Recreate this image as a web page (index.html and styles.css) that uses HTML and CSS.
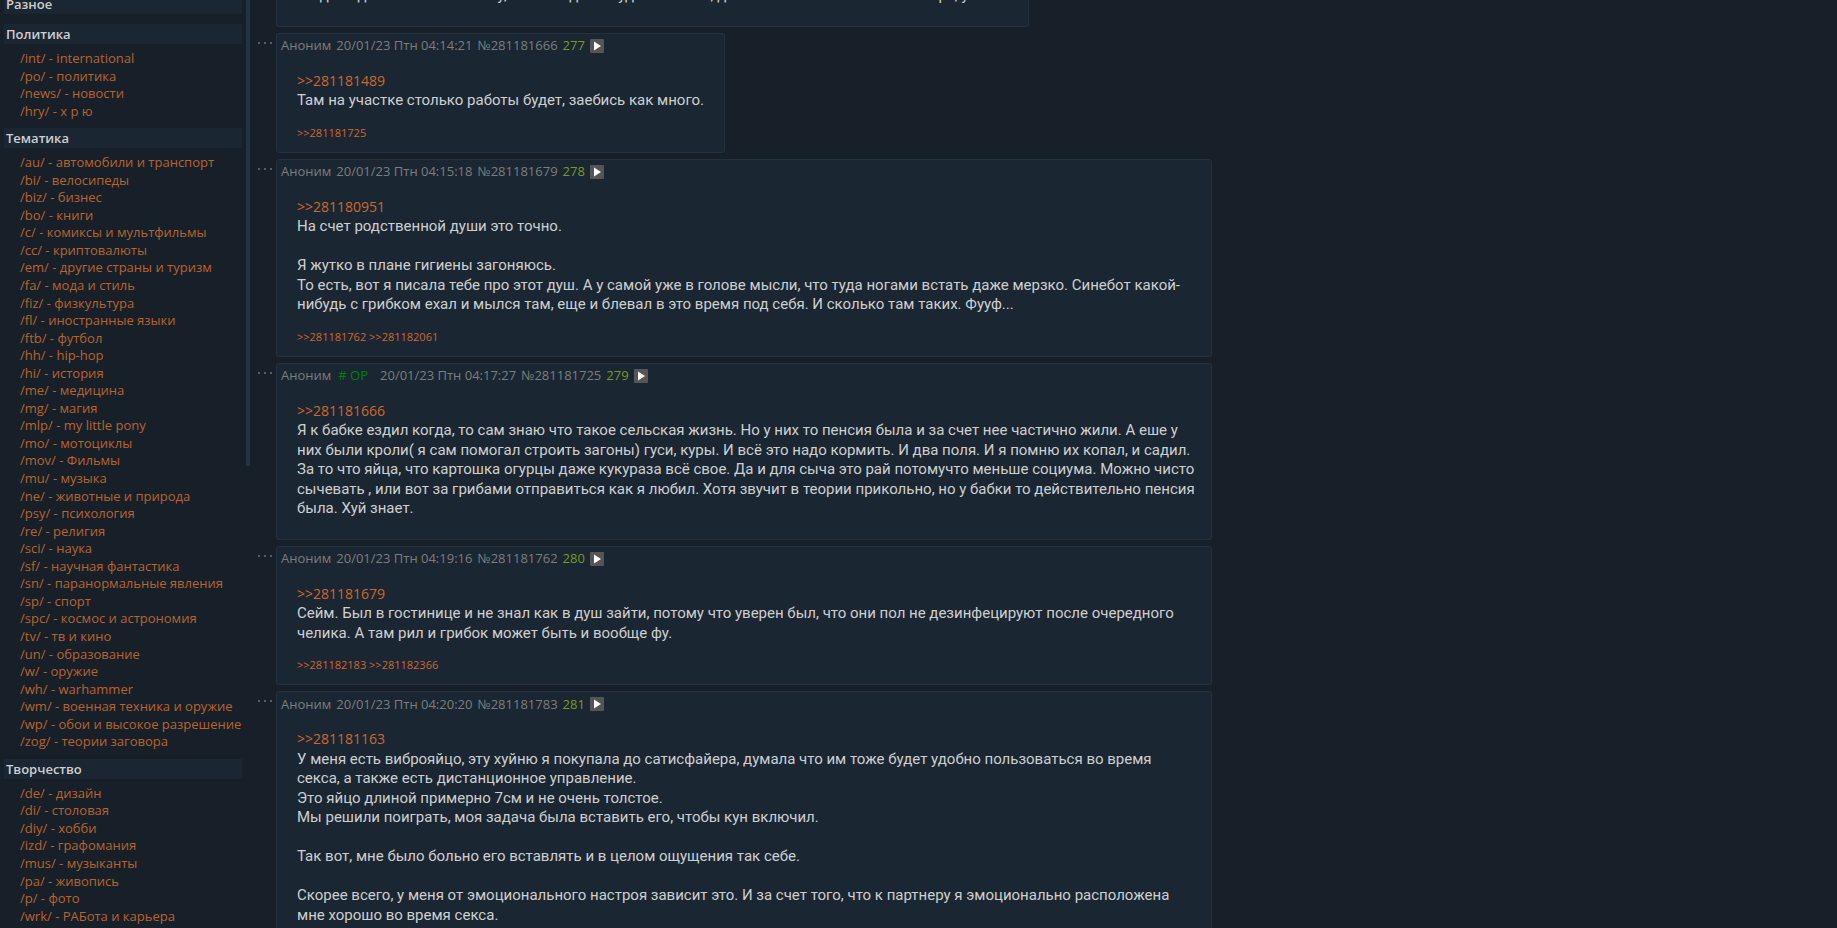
FILE: index.html
```
<!DOCTYPE html>
<html lang="ru">
<head>
    <meta charset="UTF-8">
    <meta name="viewport" content="width=device-width, initial-scale=1.0">
    <title>Тред</title>
    <link rel="stylesheet" href="styles.css">
</head>
<body>
    <div class="layout">
        <nav class="sidebar">
            <h2 class="sidebar-title">Разное</h2>

            <h2 class="sidebar-title">Политика</h2>
            <ul class="boards">
                <li><a href="#">/int/ - international</a></li>
                <li><a href="#">/po/ - политика</a></li>
                <li><a href="#">/news/ - новости</a></li>
                <li><a href="#">/hry/ - х р ю</a></li>
            </ul>

            <h2 class="sidebar-title">Тематика</h2>
            <ul class="boards">
                <li><a href="#">/au/ - автомобили и транспорт</a></li>
                <li><a href="#">/bi/ - велосипеды</a></li>
                <li><a href="#">/biz/ - бизнес</a></li>
                <li><a href="#">/bo/ - книги</a></li>
                <li><a href="#">/c/ - комиксы и мультфильмы</a></li>
                <li><a href="#">/cc/ - криптовалюты</a></li>
                <li><a href="#">/em/ - другие страны и туризм</a></li>
                <li><a href="#">/fa/ - мода и стиль</a></li>
                <li><a href="#">/fiz/ - физкультура</a></li>
                <li><a href="#">/fl/ - иностранные языки</a></li>
                <li><a href="#">/ftb/ - футбол</a></li>
                <li><a href="#">/hh/ - hip-hop</a></li>
                <li><a href="#">/hi/ - история</a></li>
                <li><a href="#">/me/ - медицина</a></li>
                <li><a href="#">/mg/ - магия</a></li>
                <li><a href="#">/mlp/ - my little pony</a></li>
                <li><a href="#">/mo/ - мотоциклы</a></li>
                <li><a href="#">/mov/ - Фильмы</a></li>
                <li><a href="#">/mu/ - музыка</a></li>
                <li><a href="#">/ne/ - животные и природа</a></li>
                <li><a href="#">/psy/ - психология</a></li>
                <li><a href="#">/re/ - религия</a></li>
                <li><a href="#">/sci/ - наука</a></li>
                <li><a href="#">/sf/ - научная фантастика</a></li>
                <li><a href="#">/sn/ - паранормальные явления</a></li>
                <li><a href="#">/sp/ - спорт</a></li>
                <li><a href="#">/spc/ - космос и астрономия</a></li>
                <li><a href="#">/tv/ - тв и кино</a></li>
                <li><a href="#">/un/ - образование</a></li>
                <li><a href="#">/w/ - оружие</a></li>
                <li><a href="#">/wh/ - warhammer</a></li>
                <li><a href="#">/wm/ - военная техника и оружие</a></li>
                <li><a href="#">/wp/ - обои и высокое разрешение</a></li>
                <li><a href="#">/zog/ - теории заговора</a></li>
            </ul>

            <h2 class="sidebar-title">Творчество</h2>
            <ul class="boards">
                <li><a href="#">/de/ - дизайн</a></li>
                <li><a href="#">/di/ - столовая</a></li>
                <li><a href="#">/diy/ - хобби</a></li>
                <li><a href="#">/izd/ - графомания</a></li>
                <li><a href="#">/mus/ - музыканты</a></li>
                <li><a href="#">/pa/ - живопись</a></li>
                <li><a href="#">/p/ - фото</a></li>
                <li><a href="#">/wrk/ - РАБота и карьера</a></li>
            </ul>
        </nav>
        <div class="scroll-thumb"></div>

        <main class="thread">
            <div class="post-row post-row-cut">
                <article class="post">
                    <div class="post-text">Тогда надо было сказать ему, что мне дома будет отлично, для нас это самое важное в мире, у меня</div>
                </article>
            </div>

            <div class="post-row">
                <button class="post-menu" aria-label="Меню поста"><svg viewBox="0 0 14 2"><path d="M0 0h2v2H0zM6 0h2v2H6zM12 0h2v2h-2z"/></svg></button>
                <article class="post">
                    <header class="post-head">
                        <span class="name">Аноним</span>
                        <span>20/01/23 Птн 04:14:21</span>
                        <a href="#" class="number">№281181666</a>
                        <span class="order">277</span>
                        <button class="play" aria-label="Ответить"><svg viewBox="0 0 14 14"><path d="M4 2.500v9L11 7z"/></svg></button>
                    </header>
                    <div class="post-text"><a href="#">&gt;&gt;281181489</a><br>Там на участке столько работы будет, заебись как много.</div>
                    <div class="replies"><a href="#">&gt;&gt;281181725</a></div>
                </article>
            </div>

            <div class="post-row">
                <button class="post-menu" aria-label="Меню поста"><svg viewBox="0 0 14 2"><path d="M0 0h2v2H0zM6 0h2v2H6zM12 0h2v2h-2z"/></svg></button>
                <article class="post">
                    <header class="post-head">
                        <span class="name">Аноним</span>
                        <span>20/01/23 Птн 04:15:18</span>
                        <a href="#" class="number">№281181679</a>
                        <span class="order">278</span>
                        <button class="play" aria-label="Ответить"><svg viewBox="0 0 14 14"><path d="M4 2.500v9L11 7z"/></svg></button>
                    </header>
                    <div class="post-text"><a href="#">&gt;&gt;281180951</a><br>На счет родственной души это точно.<br><br>Я жутко в плане гигиены загоняюсь.<br>То есть, вот я писала тебе про этот душ. А у самой уже в голове мысли, что туда ногами встать даже мерзко. Синебот какой-нибудь с грибком ехал и мылся там, еще и блевал в это время под себя. И сколько там таких. Фууф...</div>
                    <div class="replies"><a href="#">&gt;&gt;281181762</a> <a href="#">&gt;&gt;281182061</a></div>
                </article>
            </div>

            <div class="post-row">
                <button class="post-menu" aria-label="Меню поста"><svg viewBox="0 0 14 2"><path d="M0 0h2v2H0zM6 0h2v2H6zM12 0h2v2h-2z"/></svg></button>
                <article class="post">
                    <header class="post-head">
                        <span class="name">Аноним</span>
                        <span class="op"># OP</span>
                        <span>20/01/23 Птн 04:17:27</span>
                        <a href="#" class="number">№281181725</a>
                        <span class="order">279</span>
                        <button class="play" aria-label="Ответить"><svg viewBox="0 0 14 14"><path d="M4 2.500v9L11 7z"/></svg></button>
                    </header>
                    <div class="post-text post-text-wide"><a href="#">&gt;&gt;281181666</a><br>Я к бабке ездил когда, то сам знаю что такое сельская жизнь. Но у них то пенсия была и за счет нее частично жили. А еше у<br>них были кроли( я сам помогал строить загоны) гуси, куры. И всё это надо кормить. И два поля. И я помню их копал, и садил.<br>За то что яйца, что картошка огурцы даже кукураза всё свое. Да и для сыча это рай потомучто меньше социума. Можно чисто<br>сычевать , или вот за грибами отправиться как я любил. Хотя звучит в теории прикольно, но у бабки то действительно пенсия<br>была. Хуй знает.</div>
                </article>
            </div>

            <div class="post-row">
                <button class="post-menu" aria-label="Меню поста"><svg viewBox="0 0 14 2"><path d="M0 0h2v2H0zM6 0h2v2H6zM12 0h2v2h-2z"/></svg></button>
                <article class="post">
                    <header class="post-head">
                        <span class="name">Аноним</span>
                        <span>20/01/23 Птн 04:19:16</span>
                        <a href="#" class="number">№281181762</a>
                        <span class="order">280</span>
                        <button class="play" aria-label="Ответить"><svg viewBox="0 0 14 14"><path d="M4 2.500v9L11 7z"/></svg></button>
                    </header>
                    <div class="post-text"><a href="#">&gt;&gt;281181679</a><br>Сейм. Был в гостинице и не знал как в душ зайти, потому что уверен был, что они пол не дезинфецируют после очередного челика. А там рил и грибок может быть и вообще фу.</div>
                    <div class="replies"><a href="#">&gt;&gt;281182183</a> <a href="#">&gt;&gt;281182366</a></div>
                </article>
            </div>

            <div class="post-row">
                <button class="post-menu" aria-label="Меню поста"><svg viewBox="0 0 14 2"><path d="M0 0h2v2H0zM6 0h2v2H6zM12 0h2v2h-2z"/></svg></button>
                <article class="post">
                    <header class="post-head">
                        <span class="name">Аноним</span>
                        <span>20/01/23 Птн 04:20:20</span>
                        <a href="#" class="number">№281181783</a>
                        <span class="order">281</span>
                        <button class="play" aria-label="Ответить"><svg viewBox="0 0 14 14"><path d="M4 2.500v9L11 7z"/></svg></button>
                    </header>
                    <div class="post-text"><a href="#">&gt;&gt;281181163</a><br>У меня есть виброяйцо, эту хуйню я покупала до сатисфайера, думала что им тоже будет удобно пользоваться во время секса, а также есть дистанционное управление.<br>Это яйцо длиной примерно 7см и не очень толстое.<br>Мы решили поиграть, моя задача была вставить его, чтобы кун включил.<br><br>Так вот, мне было больно его вставлять и в целом ощущения так себе.<br><br>Скорее всего, у меня от эмоционального настроя зависит это. И за счет того, что к партнеру я эмоционально расположена мне хорошо во время секса.</div>
                </article>
            </div>
        </main>
    </div>
</body>
</html>
```

FILE: styles.css
```
* {
    box-sizing: border-box;
}

body {
    margin: 0;
    background-color: #172029;
    color: #cfcfcf;
    font-family: 'Open Sans', 'Noto Sans', sans-serif;
    font-size: 14px;
    line-height: 1.3;
}

a {
    color: #d1662c;
    text-decoration: none;
}

a:hover {
    color: #ff8c50;
}

.layout {
    display: flex;
    align-items: flex-start;
    height: 100vh;
    overflow: hidden;
}

/* Список досок */
.sidebar {
    flex: none;
    width: 246px;
    padding: 0 4px;
    margin-top: -6px;
}

.sidebar-title {
    margin: 0 0 10px;
    padding: 0 2px;
    background-color: #1a2733;
    font-size: 13px;
    font-weight: 600;
    line-height: 20px;
}

.boards {
    list-style: none;
    margin: -4px 0 8px;
    padding: 0 0 0 16px;
    font-size: 13px;
    line-height: 1.35;
    white-space: nowrap;
}

.boards a {
    color: #b9632f;
}

.scroll-thumb {
    flex: none;
    width: 4px;
    height: 466px;
    background-color: #213345;
}

/* Посты */
.thread {
    flex: 1;
    padding-left: 4px;
}

.post-row {
    display: flex;
    align-items: flex-start;
    margin-bottom: 6px;
}

.post-row-cut {
    margin-top: -32px;
    padding-left: 22px;
}

.post-menu {
    flex: none;
    width: 22px;
    height: 20px;
    padding: 0 4px;
    border: none;
    background: none;
    cursor: pointer;
}

.post-menu svg {
    display: block;
    fill: #5a5d60;
}

.post {
    max-width: 936px;
    border: 1px solid #233140;
    border-radius: 3px;
    background-color: #1a2733;
}

.post-head {
    display: flex;
    align-items: center;
    gap: 5px;
    height: 18px;
    margin: 3px 4px 0;
    color: #7d7d7d;
    font-size: 13px;
}

.number {
    color: #7d7d7d;
}

.op {
    margin: 0 7px 0 2px;
    color: #008000;
}

.order {
    color: #789922;
}

.play {
    width: 14px;
    height: 14px;
    padding: 0;
    border: none;
    border-radius: 1px;
    background-color: #555;
    cursor: pointer;
}

.play svg {
    display: block;
    fill: #fff;
}

.post-text {
    margin: 17px 20px 20px;
    font-family: Roboto, 'Open Sans', sans-serif;
    font-size: 15px;
}

.post-text-wide {
    margin-right: 16px;
}

.post-text a {
    font-family: 'Open Sans', sans-serif;
    font-size: 14px;
}

.replies {
    margin: -7px 20px 11px;
    font-size: 11px;
    line-height: 17px;
}
```
